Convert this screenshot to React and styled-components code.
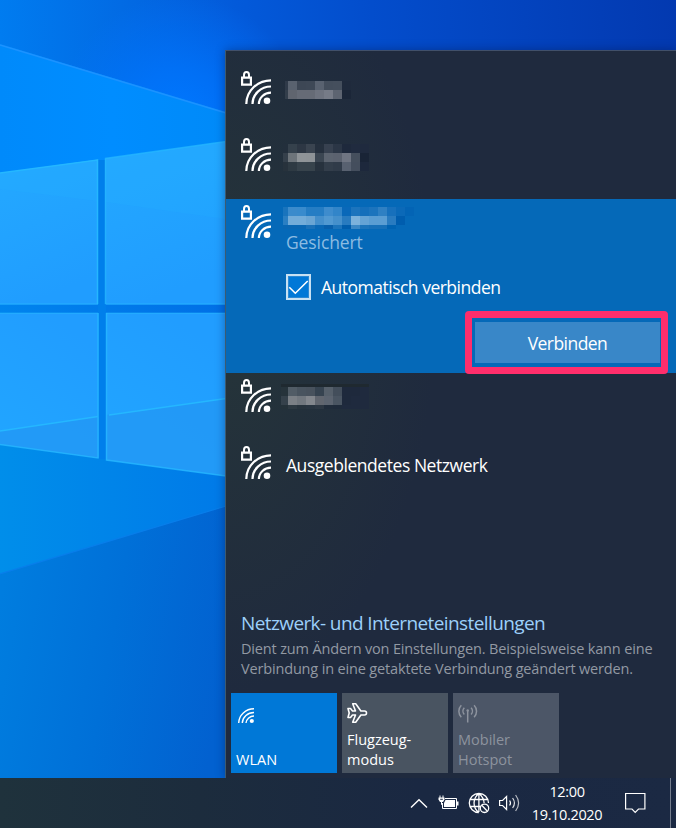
import React from "react";
import styled, { createGlobalStyle, css } from "styled-components";

const Global = createGlobalStyle`
  * { box-sizing: border-box; }
  html, body { margin: 0; padding: 0; }
  body { font-family: "Open Sans", "Noto Sans", sans-serif; color: #fff; overflow: hidden; }
  svg { display: block; }
`;

const Screen = styled.main`
  display: grid;
  grid-template: 778px 50px / 676px;
  width: 676px;
  height: 828px;
  overflow: hidden;
`;

const Wallpaper = styled.svg`
  grid-area: 1 / 1;
`;

const Flyout = styled.section`
  grid-area: 1 / 1;
  align-self: end;
  justify-self: end;
  display: flex;
  flex-direction: column;
  width: 451px;
  height: 728px;
  padding-top: 14px;
  border-left: 1px solid #3d5a70;
  border-top: 1px solid #41506a;
  background: radial-gradient(ellipse 210px 380px at 0 36%, #263539, rgba(38, 53, 57, 0)), #1f2a3e;
  box-shadow: 0 0 9px rgba(0, 20, 70, 0.4);
`;

const NetworkList = styled.ul`
  flex: 1;
  margin: 0;
  padding: 0;
  list-style: none;
`;

const Network = styled.li`
  display: flex;
  gap: 15px;
  height: ${(p) => (p.$selected ? 174 : 67)}px;
  padding: 6px 16px 0 15px;
  background: ${(p) => (p.$selected ? "#0569b8" : "transparent")};
`;

const NetworkBody = styled.div`
  flex: 1;
  display: flex;
  flex-direction: column;
  align-items: flex-start;
`;

const NetworkName = styled.span`
  margin-top: 7px;
  font-size: 17.5px;
  line-height: 24px;
  white-space: nowrap;
  letter-spacing: -0.45px;
`;

const Status = styled.span`
  margin-top: 1px;
  font-size: 17.5px;
  line-height: 24px;
  letter-spacing: -0.1px;
  color: #8cbce2;
`;

const AutoConnect = styled.label`
  display: flex;
  align-items: center;
  gap: 10px;
  height: 26px;
  margin-top: 20px;
  font-size: 17.5px;
  line-height: 24px;
  letter-spacing: -0.5px;
  white-space: nowrap;
`;

const CheckBox = styled.span`
  width: 25px;
  height: 26px;
  border: 2px solid #c8e1f3;
  background: #0078d7;
  box-shadow: inset 0 0 0 1px #2c89d4;
`;

const ConnectFrame = styled.div`
  align-self: flex-end;
  width: 203px;
  height: 63px;
  margin: 11px -8px -1px 0;
  padding: 4px 3px;
  border: 7px solid #ff2e6c;
  border-radius: 4px;
`;

const ConnectButton = styled.button`
  display: block;
  width: 185px;
  height: 41px;
  padding: 0;
  border: 0;
  background: #3987c8;
  color: #fff;
  font: 17.5px "Open Sans", sans-serif;
  letter-spacing: -0.55px;
`;

const Mosaic = styled.div`
  display: grid;
  flex-shrink: 0;
  grid-template-columns: ${(p) => p.$lead}px repeat(${(p) => p.$cols - 1}, 9px);
  grid-auto-rows: 9px;
  height: ${(p) => p.$height + (p.$rule ? 3 : 0)}px;
  overflow: hidden;
  margin: ${(p) => p.$top - (p.$rule ? 3 : 0)}px 0 0 ${(p) => 2 - p.$lead}px;
  border-top: ${(p) => (p.$rule ? `3px solid ${p.$rule}` : "0")};
`;

const Cell = styled.i`
  background: ${(p) => p.$color};
`;

const Footer = styled.footer`
  padding: 0 5px 5px;
`;

const SettingsLink = styled.a`
  display: block;
  margin: 0 10px;
  color: #9cd0fa;
  font-size: 19px;
  line-height: 26px;
  letter-spacing: -0.6px;
  white-space: nowrap;
`;

const Hint = styled.p`
  margin: 3px 10px 14px;
  color: #9299a3;
  font-size: 14.5px;
  line-height: 20px;
  letter-spacing: -0.16px;
  white-space: nowrap;
`;

const Tiles = styled.div`
  display: flex;
  gap: 5px;
`;

const tileTones = {
  on: css`background: #0078d7; color: #fff;`,
  off: css`background: #495461; color: #fff;`,
  disabled: css`background: #4c5667; color: #8d939e;`,
};

const Tile = styled.div`
  display: flex;
  flex-direction: column;
  justify-content: space-between;
  width: 106px;
  height: 80px;
  padding: 9px 5px 3px;
  font-size: 14.5px;
  line-height: 20px;
  letter-spacing: 0;
  ${(p) => tileTones[p.$tone]}
`;

const Taskbar = styled.nav`
  display: flex;
  align-items: center;
  justify-content: flex-end;
  height: 50px;
  background: linear-gradient(90deg, #1f323c, #1c2c3d 200px, #1a2842 420px, #1b2943);
`;

const TrayIcons = styled.div`
  display: flex;
  align-items: center;
  width: 121px;
`;

const Clock = styled.time`
  width: 72px;
  font-size: 14.5px;
  line-height: 23px;
  letter-spacing: -0.35px;
  text-align: center;
  white-space: nowrap;
`;

const ShowDesktop = styled.span`
  width: 6px;
  height: 50px;
  margin-left: 24px;
  border-left: 1px solid #747d8d;
`;

const SecuredWifi = () => (
  <svg width="30" height="34" viewBox="0 0 30 34" fill="none" stroke="#fff" strokeWidth="2.2">
    <path d="M1.100 6.600h8.800v7H1.100z" />
    <path d="M3 6V4a2.500 3 0 0 1 5 0v2" strokeWidth="2" />
    <path d="M5.300 33A24.700 23.600 0 0 1 30 9.400M11.500 33A18.500 17.500 0 0 1 30 15.500M17.900 33A12.100 11.400 0 0 1 30 21.600" />
    <circle cx="26" cy="29.800" r="3.300" fill="#fff" stroke="none" />
  </svg>
);

const WifiIcon = () => (
  <svg width="18" height="28" viewBox="0 0 18 28" fill="none" stroke="#fff" strokeWidth="1.400">
    <path d="M2.700 21A15.300 14.500 0 0 1 18 6.800M6.300 21A11.700 11 0 0 1 18 10.500M10 21A8 8 0 0 1 18 14" />
    <circle cx="15.800" cy="19" r="2.100" fill="#fff" stroke="none" />
  </svg>
);

const PlaneIcon = () => (
  <svg width="21" height="22" viewBox="0 0 21 22" fill="none" stroke="#fff" strokeWidth="1.600" strokeLinejoin="round">
    <path d="M1 6.500h2.500l2 2.500h3L5.700 1.800h3l5.200 7.200h3.600a2 2 0 0 1 0 4h-3.600l-5.200 7.200h-3L8.500 13h-3l-2 2.500H1l1.200-4.500z" />
  </svg>
);

const HotspotIcon = () => (
  <svg width="20" height="22" viewBox="0 0 20 22" fill="none" stroke="#8d939e" strokeWidth="1.500">
    <path d="M3.300 15.200a8.600 8.600 0 0 1 0-12M16.100 15.200a8.600 8.600 0 0 0 0-12M6.300 12.500a5 5 0 0 1 0-6.800M13.100 12.500a5 5 0 0 0 0-6.800" />
    <path d="M9.700 8v12.500" />
    <circle cx="9.700" cy="8.500" r="1.200" fill="#8d939e" stroke="none" />
  </svg>
);

const CheckMark = () => (
  <svg width="21" height="22" viewBox="0 0 21 22" fill="none" stroke="#fff" strokeWidth="1.600">
    <path d="M1.300 11.200l6 6L19.700 5" />
  </svg>
);

const ChevronIcon = () => (
  <svg width="28" height="26" viewBox="0 0 28 26" fill="none" stroke="#fff" strokeWidth="1.400">
    <path d="M1 17.500L9 9.700l8 7.800" />
  </svg>
);

const BatteryIcon = () => (
  <svg width="30" height="26" viewBox="0 0 30 26" fill="none" stroke="#fff">
    <path d="M7 8.500h11.500v10H4.500V13" />
    <path d="M19 11.500h1.500v4H19z" fill="#fff" stroke="none" />
    <path d="M7.500 10H17v7H6v-4z" fill="#fff" stroke="none" />
    <path d="M2 5.500V8M5 5.500V8M3.500 11v3.500h1" />
    <path d="M.500 7.500h6v2L5 12H2L.500 9.500z" fill="#fff" stroke="none" />
    <path d="M2.200 9.300h2.600" stroke="#1a2842" />
  </svg>
);

const GlobeIcon = () => (
  <svg width="30" height="26" viewBox="0 0 30 26" fill="none" stroke="#fff" strokeWidth="1.300">
    <path d="M20.500 13A9.600 9.600 0 1 0 10.900 22.600M10.900 3.400c-6.500 5-6.500 14 0 19.200M10.900 3.400c3.800 3 5 6 5.200 9.600M10.900 3.400V22M2.100 9.500h17.600M2.100 16.500h10" />
    <circle cx="16.500" cy="18.300" r="4.200" fill="#1a2842" />
    <path d="M13.700 15.300l5.700 5.900" />
  </svg>
);

const SpeakerIcon = () => (
  <svg width="24" height="26" viewBox="0 0 24 26" fill="none" stroke="#fff" strokeWidth="1.200">
    <path d="M1.600 10.500h3l4-4v13l-4-4h-3z" />
    <path d="M11.600 10.500q1.800 2.500 0 5" />
    <path d="M14.600 8q3.700 5 0 10" opacity="0.850" />
    <path d="M17.600 5q6 8 0 16" opacity="0.700" />
  </svg>
);

const NoticeIcon = styled(({ className }) => (
  <svg className={className} width="21" height="22" viewBox="0 0 21 22" fill="none" stroke="#fff" strokeWidth="1.200">
    <path d="M.600 1.500h19.300v15.500h-6.400L10.200 20.300 7 17H.600z" />
  </svg>
))`
  margin-left: 22px;
`;

const hiddenNames = {
  first: {
    lead: 3, top: 10, height: 18,
    rows: [
      ["#2f3a49", "#59626f", "#3d4755", "#3e4856", "#596270", "#444e5c", "#454f5d", "#1f2a3c"],
      ["#333e4b", "#60656f", "#666b76", "#666b76", "#6e737f", "#767b87", "#5d6471", "#1b2638"],
    ],
  },
  second: {
    lead: 5, top: 6, height: 27,
    rows: [
      ["#232f3c", "#35414c", "#2d3744", "#3a4450", "#25303e", "#374150", "#2b3646", "#1e293c", "#202b3f", "#1f2a3e"],
      ["#35404b", "#6d747a", "#8f9498", "#8e9397", "#3b4652", "#5c6470", "#5b626f", "#6f7582", "#454f5d", "#192436"],
      ["#27323c", "#2e3a43", "#37434c", "#37434c", "#27323e", "#333e4b", "#303b49", "#586170", "#444e5d", "#1d283c"],
    ],
  },
  third: {
    lead: 5, top: 2, height: 22,
    rows: [
      ["#1974bd", "#3b8bcc", "#398bcd", "#257dc4", "#257dc4", "#3e8ccd", "#3285c9", "#0968b9", "#1c74bd", "#156fbb", "#1c74bd", "#2f80c3", "#1770bc", "#0b69b8", "#0364b5"],
      ["#2a7fc3", "#73acd9", "#73acd9", "#6aa5d4", "#448fcc", "#5199d2", "#4590cc", "#287bc0", "#7cb2dc", "#65a3d5", "#5a9dd3", "#5a9dd3", "#297bc0", "#005dae", "#0569b8"],
      ["#0967b4", "#0a67b3", "#0a67b3", "#1b71b8", "#0a68b5", "#085fab", "#1c74bb", "#005dac", "#3b88c5", "#1d74ba", "#1870b8", "#1770b8", "#0063b2", "#0569b8", "#0569b8"],
    ],
  },
  fourth: {
    lead: 7, top: 8, height: 22, rule: "#1f2930",
    rows: [
      ["#26333b", "#515c66", "#49545f", "#48525d", "#364350", "#56606b", "#434e5b", "#1e293c", "#1e293c", "#1f2a3e"],
      ["#35414b", "#7b8086", "#72787f", "#83878d", "#61666f", "#5c6470", "#4a5562", "#1e293c", "#1f2a3e", "#1f2a3e"],
      ["#243139", "#2d3942", "#27333d", "#283440", "#2c3743", "#202c3b", "#1f2b3b", "#1f2a3e", "#1f2a3e", "#1f2a3e"],
    ],
  },
};

const HiddenName = ({ data }) => (
  <Mosaic $lead={data.lead} $cols={data.rows[0].length} $top={data.top} $height={data.height} $rule={data.rule}>
    {data.rows.flat().map((color, i) => (
      <Cell key={i} $color={color} />
    ))}
  </Mosaic>
);

const DesktopArt = () => (
  <Wallpaper width="676" height="778" viewBox="0 0 676 778">
    <defs>
      <linearGradient id="sky" gradientUnits="userSpaceOnUse" x1="0" y1="30" x2="676" y2="0">
        <stop offset="0" stopColor="#007cf0" />
        <stop offset="0.180" stopColor="#026be4" />
        <stop offset="0.350" stopColor="#035ada" />
        <stop offset="0.550" stopColor="#034dcc" />
        <stop offset="1" stopColor="#0339b0" />
      </linearGradient>
      <radialGradient id="skyGlow" gradientUnits="userSpaceOnUse" cx="180" cy="120" r="125">
        <stop offset="0" stopColor="#0078ff" />
        <stop offset="0.400" stopColor="#0076ff" stopOpacity="0.700" />
        <stop offset="1" stopColor="#0074ff" stopOpacity="0" />
      </radialGradient>
      <linearGradient id="beam" x1="0" y1="0" x2="1" y2="0">
        <stop offset="0" stopColor="#008afb" />
        <stop offset="0.500" stopColor="#008dff" />
        <stop offset="1" stopColor="#008af8" />
      </linearGradient>
      <linearGradient id="lowBeam" x1="0" y1="0" x2="1" y2="0">
        <stop offset="0" stopColor="#008eea" />
        <stop offset="1" stopColor="#007ae8" />
      </linearGradient>
      <linearGradient id="floor" gradientUnits="userSpaceOnUse" x1="0" y1="600" x2="230" y2="640">
        <stop offset="0" stopColor="#007ddf" />
        <stop offset="0.500" stopColor="#0070d8" />
        <stop offset="1" stopColor="#0261d0" />
      </linearGradient>
      <linearGradient id="pane" x1="0" y1="0" x2="0.300" y2="1">
        <stop offset="0" stopColor="#24a9ff" />
        <stop offset="1" stopColor="#209dff" />
      </linearGradient>
      <linearGradient id="paneLow" x1="0" y1="1" x2="0.500" y2="0">
        <stop offset="0" stopColor="#21a6ff" />
        <stop offset="1" stopColor="#219dff" />
      </linearGradient>
      <linearGradient id="crossbar" x1="0" y1="0" x2="1" y2="0">
        <stop offset="0" stopColor="#0084ee" />
        <stop offset="1" stopColor="#006fe6" />
      </linearGradient>
    </defs>
    <path fill="url(#sky)" d="M0 0H676V778H0z" />
    <path fill="url(#skyGlow)" d="M0 0H400V250H0z" />
    <path fill="url(#beam)" d="M0 44L226 112V400H0z" />
    <path stroke="#1c92ff" strokeWidth="1.500" d="M0 45L226 113" />
    <path fill="url(#lowBeam)" d="M0 380H226V520L0 580z" />
    <path fill="url(#floor)" d="M0 574L226 506V778H0z" />
    <path stroke="#087eea" strokeWidth="1.200" d="M0 574L226 506" />
    <path fill="url(#crossbar)" d="M0 304H226V313.500H0z" />
    <path fill="#007feb" d="M98 160h8v299h-8z" />
    <path fill="url(#pane)" d="M0 173L98 159.500V304.500H0z" />
    <path fill="url(#pane)" d="M105 158.500L226 141.500V304.500H105.500z" />
    <path fill="#24b4ff" opacity="0.200" d="M0 173L98 159.500V201L0 189zM105.500 158.500L226 141.500V219L105.500 202z" />
    <path fill="url(#paneLow)" d="M0 313H98.500V458L0 444.500z" />
    <path fill="url(#paneLow)" d="M106 313H226V476L106 460z" />
    <path fill="#2397f4" opacity="0.750" d="M0 431L98.500 416.500V458L0 444.500zM106 415L226 398.500V476L106 460z" />
    <g fill="none" stroke="#25b7ff" strokeWidth="1.500">
      <path d="M0 173L97.500 160V304" />
      <path d="M105.500 304V158.500L226 141.500" opacity="0.750" />
      <path d="M98 313V458L0 444.500M106.500 313V460L226 476" opacity="0.800" />
      <path d="M0 431L98 416.500M109 415L226 398.500" />
      <path d="M0 304H98M106 304H226M0 313.200H98M106 313.200H226" opacity="0.500" />
    </g>
  </Wallpaper>
);

export default function App() {
  return (
    <>
      <Global />
      <Screen>
        <DesktopArt />
        <Flyout>
          <NetworkList>
            <Network>
              <SecuredWifi />
              <HiddenName data={hiddenNames.first} />
            </Network>
            <Network>
              <SecuredWifi />
              <HiddenName data={hiddenNames.second} />
            </Network>
            <Network $selected>
              <SecuredWifi />
              <NetworkBody>
                <HiddenName data={hiddenNames.third} />
                <Status>Gesichert</Status>
                <AutoConnect>
                  <CheckBox><CheckMark /></CheckBox>
                  Automatisch verbinden
                </AutoConnect>
                <ConnectFrame>
                  <ConnectButton>Verbinden</ConnectButton>
                </ConnectFrame>
              </NetworkBody>
            </Network>
            <Network>
              <SecuredWifi />
              <HiddenName data={hiddenNames.fourth} />
            </Network>
            <Network>
              <SecuredWifi />
              <NetworkName>Ausgeblendetes Netzwerk</NetworkName>
            </Network>
          </NetworkList>
          <Footer>
            <SettingsLink>Netzwerk- und Interneteinstellungen</SettingsLink>
            <Hint>
              Dient zum Ändern von Einstellungen. Beispielsweise kann eine
              <br />
              Verbindung in eine getaktete Verbindung geändert werden.
            </Hint>
            <Tiles>
              <Tile $tone="on"><WifiIcon />WLAN</Tile>
              <Tile $tone="off"><PlaneIcon /><span>Flugzeug-<br />modus</span></Tile>
              <Tile $tone="disabled"><HotspotIcon /><span>Mobiler<br />Hotspot</span></Tile>
            </Tiles>
          </Footer>
        </Flyout>
        <Taskbar>
          <TrayIcons>
            <ChevronIcon />
            <BatteryIcon />
            <GlobeIcon />
            <SpeakerIcon />
          </TrayIcons>
          <Clock>12:00<br />19.10.2020</Clock>
          <NoticeIcon />
          <ShowDesktop />
        </Taskbar>
      </Screen>
    </>
  );
}
